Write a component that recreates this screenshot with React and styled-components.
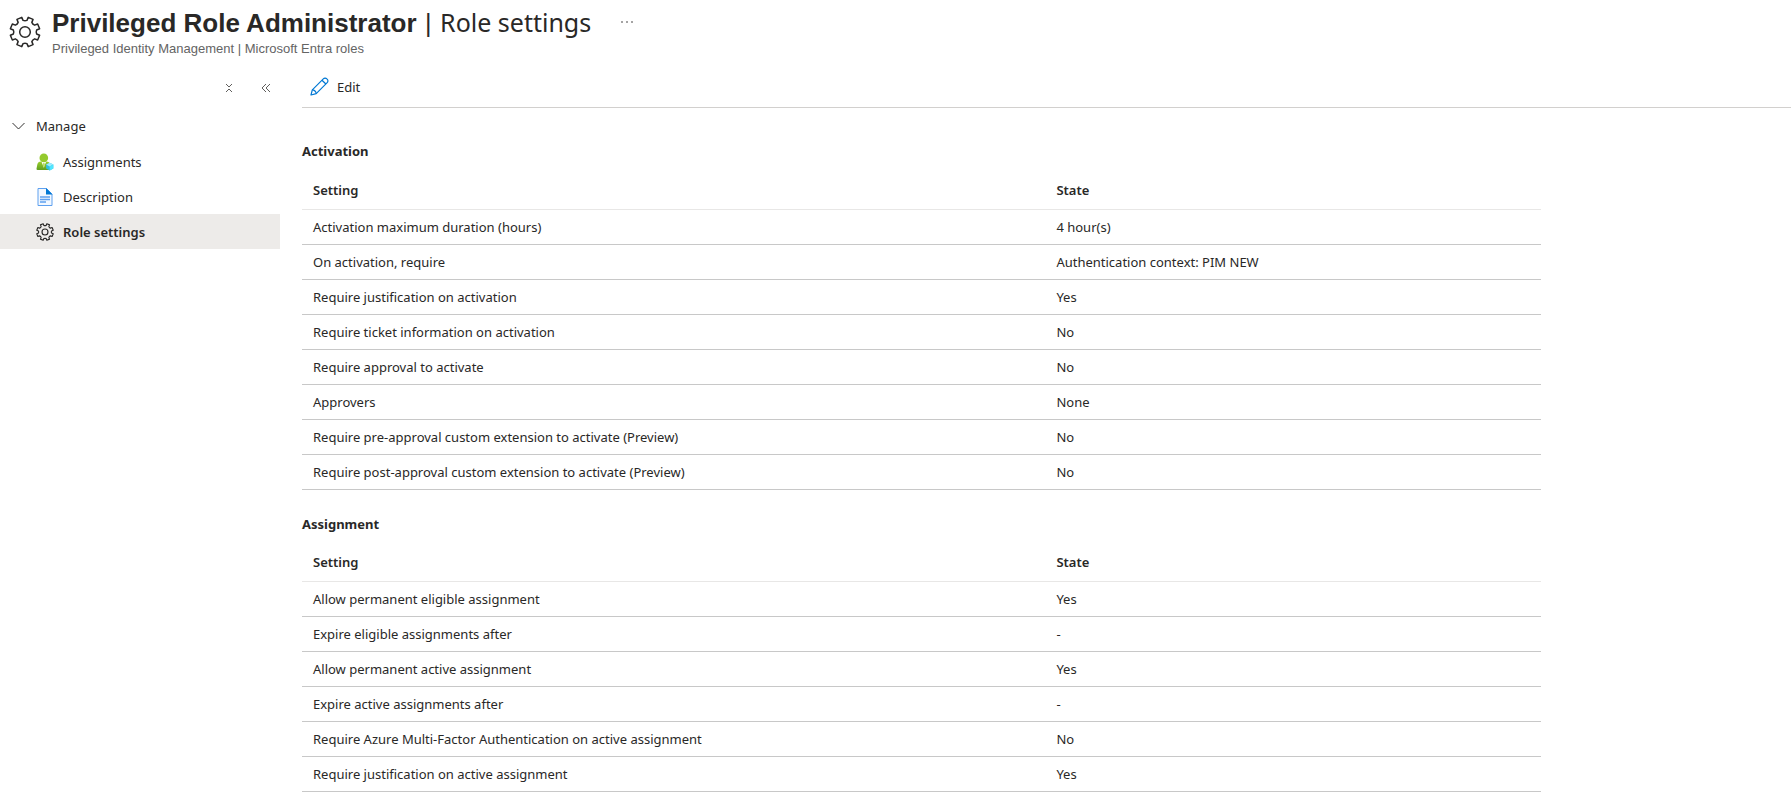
import { useState } from "react";
import styled, { createGlobalStyle } from "styled-components";

const GlobalStyle = createGlobalStyle`
  * {
    box-sizing: border-box;
  }
  body {
    margin: 0;
    background: #ffffff;
    color: #292827;
    font-family: "Noto Sans", "Open Sans", sans-serif;
    font-size: 13px;
    line-height: 20px;
    overflow: hidden;
  }
`;

const Header = styled.header`
  display: flex;
  align-items: center;
  gap: 11px;
  height: 64px;
  padding: 0 9px;
`;

const TitleRow = styled.div`
  display: flex;
  align-items: center;
  gap: 24px;
`;

const Title = styled.h1`
  margin: 0;
  font-size: 25px;
  font-weight: 400;
  line-height: 32px;
`;

const TitleName = styled.strong`
  font-family: "Liberation Sans", Arial, sans-serif;
  font-size: 26px;
  font-weight: 700;
`;

const Separator = styled.span`
  margin: 0 2px;
  font-family: "Liberation Sans", Arial, sans-serif;
`;

const Subtitle = styled.p`
  margin: 0;
  color: #646464;
  font-family: "Liberation Sans", Arial, sans-serif;
  font-size: 13px;
  line-height: 20px;
`;

const IconButton = styled.button`
  display: flex;
  align-items: center;
  justify-content: center;
  width: 24px;
  height: 24px;
  padding: 0;
  border: 0;
  background: transparent;
  color: #323130;
  cursor: pointer;
`;

const Layout = styled.div`
  display: flex;
  align-items: flex-start;
`;

const Sidebar = styled.nav`
  flex: 0 0 280px;
`;

const SidebarTools = styled.div`
  display: flex;
  align-items: center;
  justify-content: flex-end;
  gap: 13px;
  height: 46px;
  padding: 2px 2px 0 0;
`;

const GroupButton = styled.button`
  display: flex;
  align-items: center;
  gap: 10px;
  width: 100%;
  height: 32px;
  padding: 0 12px;
  border: 0;
  background: transparent;
  color: inherit;
  font: inherit;
  cursor: pointer;
`;

const Menu = styled.ul`
  margin: 0;
  padding: 2px 0 0;
  list-style: none;
`;

const MenuLink = styled.a`
  display: flex;
  align-items: center;
  gap: 9px;
  height: 35px;
  padding-left: 36px;
  background: ${({ $active }) => ($active ? "#edebe9" : "transparent")};
  color: inherit;
  font-weight: ${({ $active }) => ($active ? 600 : 400)};
  text-decoration: none;
`;

const Main = styled.main`
  flex: 1;
  min-width: 0;
  padding-left: 22px;
`;

const CommandBar = styled.div`
  display: flex;
  align-items: center;
  height: 44px;
  padding-top: 2px;
  border-bottom: 1px solid #d2d0ce;
`;

const CommandButton = styled.button`
  display: flex;
  align-items: center;
  gap: 8px;
  padding: 0 8px;
  border: 0;
  background: transparent;
  color: inherit;
  font: inherit;
  cursor: pointer;
`;

const Section = styled.section`
  max-width: 1239px;
  padding-top: 33px;

  & + & {
    padding-top: 24px;
  }
`;

const SectionTitle = styled.h2`
  margin: 0;
  font-size: 13px;
  font-weight: 700;
  line-height: 20px;
`;

const Table = styled.table`
  width: 100%;
  margin-top: 10px;
  border-collapse: collapse;
  table-layout: fixed;
`;

const HeadCell = styled.th`
  width: ${({ $width }) => $width};
  height: 38px;
  padding: 0 11px;
  border-bottom: 1px solid #e8e7e6;
  font-weight: 600;
  text-align: left;
`;

const Cell = styled.td`
  height: 35px;
  padding: 0 11px;
  border-bottom: 1px solid #c8c8c8;
`;

const point = (radius, degrees) => {
  const angle = (degrees * Math.PI) / 180;
  return `${(16 + radius * Math.sin(angle)).toFixed(2)} ${(16 - radius * Math.cos(angle)).toFixed(2)}`;
};

// eight teeth, with a notch straight up
const gearPath =
  Array.from({ length: 8 }, (_, i) => {
    const a = 22.5 + i * 45;
    return `${i ? "L" : "M"}${point(11.8, a - 13)} L${point(15, a - 10)} L${point(15, a + 10)} L${point(11.8, a + 13)} Q${point(10.8, a + 22.5)} ${point(11.8, a + 32)}`;
  }).join(" ") + "Z";

const GearIcon = ({ size, stroke }) => (
  <svg width={size} height={size} viewBox="0 0 32 32" fill="none" stroke="#292827" strokeWidth={stroke} strokeLinejoin="round" aria-hidden="true">
    <path d={gearPath} />
    <circle cx="16" cy="16" r="5.3" />
  </svg>
);

const PersonIcon = () => (
  <svg width="18" height="18" viewBox="0 0 18 18" aria-hidden="true">
    <defs>
      <linearGradient id="person" x1="0" y1="0" x2="0" y2="1">
        <stop offset="0" stopColor="#9bd02e" />
        <stop offset="1" stopColor="#5f9f1f" />
      </linearGradient>
    </defs>
    <path d="M1.5 17C.7 17 .4 16.500 .5 15.800L1.300 11.500C1.700 9.500 3 8.500 5 8.500H10.500C12.500 8.500 13.700 9.500 14 11.500L15 17Z" fill="url(#person)" />
    <path d="M5.400 8.500L7.800 14.500L10.200 8.500Z" fill="#fff" />
    <path d="M7.200 10H8.500L9 12L7.800 15L6.700 12Z" fill="#b7dc6b" />
    <circle cx="7.800" cy="4.900" r="4.300" fill="#94ca2d" />
    <path d="M13.700 9.800L17.300 11.600V15.400L13.700 17.500L10.100 15.400V11.600Z" fill="#32bedd" />
    <path d="M13.700 9.800L17.300 11.600L13.700 13.600L10.100 11.600Z" fill="#9cebff" />
    <path d="M13.700 13.600L17.300 11.600V15.400L13.700 17.500Z" fill="#50e6ff" />
  </svg>
);

const DocumentIcon = () => (
  <svg width="18" height="18" viewBox="0 0 18 18" aria-hidden="true">
    <path d="M2 .5H10.500L16 6V17.500H2Z" fill="#f2f8ff" stroke="#5ea0ef" />
    <path d="M10 0L16.500 6.500H10Z" fill="#0078d4" />
    <path d="M4 9H14M4 11.500H14M4 14H10" stroke="#5ea0ef" strokeWidth="1.300" />
  </svg>
);

const PencilIcon = () => (
  <svg width="19" height="19" viewBox="0 0 19 19" fill="none" stroke="#0078d4" strokeWidth="1.200" strokeLinejoin="round" aria-hidden="true">
    <path d="M1 18L2.300 12.800L13.300 1.800C14.300 .8 15.800 .8 16.900 1.900C18.200 3.100 18.200 4.600 17.200 5.600L6.200 16.700Z" />
    <path d="M12 3.200L15.900 7M2.300 12.800C4.300 12.800 6.200 14.700 6.200 16.700" />
  </svg>
);

const ChevronIcon = ({ open }) => (
  <svg width="14" height="14" viewBox="0 0 14 14" fill="none" stroke="#323130" aria-hidden="true">
    <path d={open ? "M.5 4L6.500 10L12.500 4" : "M4 1L10 7L4 13"} />
  </svg>
);

const activation = [
  ["Activation maximum duration (hours)", "4 hour(s)"],
  ["On activation, require", "Authentication context: PIM NEW"],
  ["Require justification on activation", "Yes"],
  ["Require ticket information on activation", "No"],
  ["Require approval to activate", "No"],
  ["Approvers", "None"],
  ["Require pre-approval custom extension to activate (Preview)", "No"],
  ["Require post-approval custom extension to activate (Preview)", "No"],
];

const assignment = [
  ["Allow permanent eligible assignment", "Yes"],
  ["Expire eligible assignments after", "-"],
  ["Allow permanent active assignment", "Yes"],
  ["Expire active assignments after", "-"],
  ["Require Azure Multi-Factor Authentication on active assignment", "No"],
  ["Require justification on active assignment", "Yes"],
];

const menuItems = [
  { label: "Assignments", icon: <PersonIcon /> },
  { label: "Description", icon: <DocumentIcon /> },
  { label: "Role settings", icon: <GearIcon size={18} stroke={2} /> },
];

const SettingsSection = ({ id, title, rows }) => (
  <Section aria-labelledby={id}>
    <SectionTitle id={id}>{title}</SectionTitle>
    <Table aria-labelledby={id}>
      <thead>
        <tr>
          <HeadCell scope="col" $width="60%">Setting</HeadCell>
          <HeadCell scope="col" $width="40%">State</HeadCell>
        </tr>
      </thead>
      <tbody>
        {rows.map(([setting, state]) => (
          <tr key={setting}>
            <Cell>{setting}</Cell>
            <Cell>{state}</Cell>
          </tr>
        ))}
      </tbody>
    </Table>
  </Section>
);

const App = () => {
  const [open, setOpen] = useState(true);
  const [selected, setSelected] = useState("Role settings");

  return (
    <>
      <GlobalStyle />
      <Header>
        <GearIcon size={32} stroke={1.5} />
        <div>
          <TitleRow>
            <Title>
              <TitleName>Privileged Role Administrator</TitleName> <Separator>|</Separator> Role settings
            </Title>
            <IconButton type="button" aria-label="More">
              <svg width="14" height="4" viewBox="0 0 14 4" fill="#323130" aria-hidden="true">
                <circle cx="2" cy="2" r="0.8" />
                <circle cx="7" cy="2" r="0.8" />
                <circle cx="12" cy="2" r="0.8" />
              </svg>
            </IconButton>
          </TitleRow>
          <Subtitle>Privileged Identity Management | Microsoft Entra roles</Subtitle>
        </div>
      </Header>
      <Layout>
        <Sidebar aria-label="Role">
          <SidebarTools>
            <IconButton type="button" aria-label="Collapse all" onClick={() => setOpen(false)}>
              <svg width="10" height="10" viewBox="0 0 10 10" fill="none" stroke="#605e5c" aria-hidden="true">
                <path d="M2 1L5 4L8 1M2 9L5 6L8 9" />
              </svg>
            </IconButton>
            <IconButton type="button" aria-label="Hide menu">
              <svg width="10" height="10" viewBox="0 0 10 10" fill="none" stroke="#605e5c" aria-hidden="true">
                <path d="M5 1L1 5L5 9M9 1L5 5L9 9" />
              </svg>
            </IconButton>
          </SidebarTools>
          <GroupButton type="button" aria-expanded={open} onClick={() => setOpen(!open)}>
            <ChevronIcon open={open} />
            Manage
          </GroupButton>
          {open && (
            <Menu>
              {menuItems.map(({ label, icon }) => (
                <li key={label}>
                  <MenuLink href="#" $active={label === selected} onClick={() => setSelected(label)}>
                    {icon}
                    {label}
                  </MenuLink>
                </li>
              ))}
            </Menu>
          )}
        </Sidebar>
        <Main>
          <CommandBar>
            <CommandButton type="button">
              <PencilIcon />
              Edit
            </CommandButton>
          </CommandBar>
          <SettingsSection id="activation" title="Activation" rows={activation} />
          <SettingsSection id="assignment" title="Assignment" rows={assignment} />
        </Main>
      </Layout>
    </>
  );
};

export default App;
